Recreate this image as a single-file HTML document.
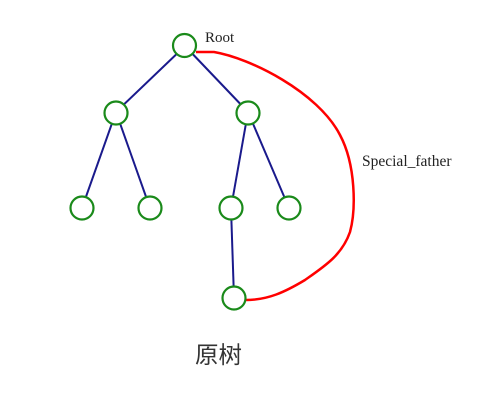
<!DOCTYPE html>
<html><head><meta charset="utf-8"><style>
html,body{margin:0;padding:0;background:#fff;width:500px;height:401px;overflow:hidden}
</style></head><body>
<svg width="500" height="401" xmlns="http://www.w3.org/2000/svg">
<g stroke="#1a1a8c" stroke-width="2" fill="none">
<line x1="185" y1="46" x2="116" y2="112"/>
<line x1="185" y1="46" x2="248" y2="112"/>
<line x1="116" y1="112" x2="82" y2="208"/>
<line x1="116" y1="112" x2="150" y2="208"/>
<line x1="248" y1="112" x2="231" y2="208"/>
<line x1="248" y1="112" x2="289" y2="208"/>
<line x1="231" y1="208" x2="234" y2="298"/>
</g>
<path d="M196 52 L214 52 C250 58 318 92 340 135 C356 165 356 210 350 232 C342 255 325 266 305 280 C285 292 268 300 246 300" stroke="#f00" stroke-width="2.5" fill="none"/>
<g stroke="#1a8a1a" stroke-width="2.2" fill="#fff">
<circle cx="184.5" cy="45.5" r="11.5"/>
<circle cx="116" cy="113" r="11.5"/>
<circle cx="248" cy="113" r="11.5"/>
<circle cx="82" cy="208" r="11.5"/>
<circle cx="150" cy="208" r="11.5"/>
<circle cx="231" cy="208" r="11.5"/>
<circle cx="289" cy="208" r="11.5"/>
<circle cx="234" cy="298" r="11.5"/>
</g>
<text x="205" y="42" font-family="Liberation Serif, serif" font-size="15" fill="#222">Root</text>
<text x="362" y="166" font-family="Liberation Serif, serif" font-size="15.5" fill="#222">Special_father</text>
<text x="195" y="363" font-family="Liberation Sans, 'Noto Sans CJK SC', sans-serif" font-size="23.5" fill="#333">原树</text>
</svg>
</body></html>
